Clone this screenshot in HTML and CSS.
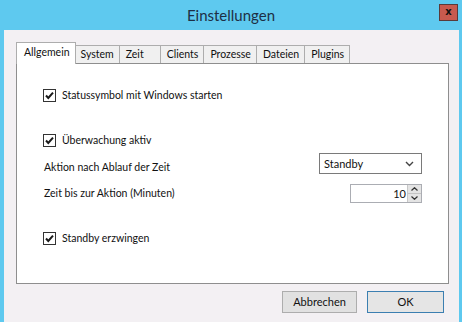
FILE: index.html
```html
<!DOCTYPE html>
<html lang="de">
<head>
  <meta charset="UTF-8">
  <link rel="stylesheet" href="styles.css">
</head>
<body>
  <div class="window">
    <div class="titlebar">
      <span></span>
      <div class="title">Einstellungen</div>
      <div class="close">x</div>
    </div>
    <div class="client">
      <div class="tabstrip">
        <div class="tab active">Allgemein</div>
        <div class="tab">System</div>
        <div class="tab tab-zeit">Zeit</div>
        <div class="tab">Clients</div>
        <div class="tab">Prozesse</div>
        <div class="tab">Dateien</div>
        <div class="tab">Plugins</div>
      </div>
      <div class="panel">
        <label class="row check first">
          <svg class="box" width="13" height="13" viewBox="0 0 13 13"><rect x="0.5" y="0.5" width="12" height="12" fill="#fff" stroke="#333"/><path d="M3 6.5 L5.3 9 L10 3.6" fill="none" stroke="#1a1a1a" stroke-width="2"/></svg>
          <span>Statussymbol mit Windows starten</span>
        </label>
        <label class="row check second">
          <svg class="box" width="13" height="13" viewBox="0 0 13 13"><rect x="0.5" y="0.5" width="12" height="12" fill="#fff" stroke="#333"/><path d="M3 6.5 L5.3 9 L10 3.6" fill="none" stroke="#1a1a1a" stroke-width="2"/></svg>
          <span>Überwachung aktiv</span>
        </label>
        <div class="row field select-row">
          <span class="label">Aktion nach Ablauf der Zeit</span>
          <div class="select">
            <span>Standby</span>
            <svg width="9" height="6" viewBox="0 0 9 6"><path d="M1 1 L4.5 4.5 L8 1" fill="none" stroke="#444" stroke-width="1.4"/></svg>
          </div>
        </div>
        <div class="row field spin-row">
          <span class="label">Zeit bis zur Aktion (Minuten)</span>
          <div class="spinner">
            <span class="value">10</span>
            <div class="arrows">
              <div class="arrow"><svg width="7" height="4" viewBox="0 0 7 4"><path d="M0.5 3.5 L3.5 0.7 L6.5 3.5" fill="none" stroke="#333" stroke-width="1.2"/></svg></div>
              <div class="arrow"><svg width="7" height="4" viewBox="0 0 7 4"><path d="M0.5 0.5 L3.5 3.3 L6.5 0.5" fill="none" stroke="#333" stroke-width="1.2"/></svg></div>
            </div>
          </div>
        </div>
        <label class="row check third">
          <svg class="box" width="13" height="13" viewBox="0 0 13 13"><rect x="0.5" y="0.5" width="12" height="12" fill="#fff" stroke="#333"/><path d="M3 6.5 L5.3 9 L10 3.6" fill="none" stroke="#1a1a1a" stroke-width="2"/></svg>
          <span>Standby erzwingen</span>
        </label>
      </div>
      <div class="buttons">
        <div class="button">Abbrechen</div>
        <div class="button default">OK</div>
      </div>
    </div>
  </div>
</body>
</html>
```

FILE: styles.css
```css
* {
  margin: 0;
  padding: 0;
  box-sizing: border-box;
}
html, body {
  width: 462px;
  height: 322px;
  overflow: hidden;
}
body {
  font-family: Lato, "Liberation Sans", sans-serif;
  font-size: 10.5px;
  color: #111;
}
.window {
  display: flex;
  flex-direction: column;
  width: 462px;
  height: 322px;
  background-color: #5ec9ef;
}
/* Titelleiste */
.titlebar {
  display: grid;
  grid-template-columns: 1fr auto 1fr;
  height: 30px;
}
.title {
  align-self: center;
  font-size: 15px;
  color: #1d2f45;
}
.close {
  justify-self: end;
  align-self: start;
  width: 19px;
  height: 17px;
  margin: 4px 4px 0 0;
  border: 1px solid #5a3a3a;
  background-color: #c75a4e;
  color: #111;
  font-family: "DejaVu Sans", sans-serif;
  font-weight: bold;
  font-size: 10px;
  line-height: 14px;
  text-align: center;
}
.client {
  flex: 1;
  display: flex;
  flex-direction: column;
  margin: 0 3px 0 4px;
  padding: 12px 10px 0 12px;
  background-color: #f3f0f3;
}
/* Reiter */
.tabstrip {
  display: flex;
  align-items: flex-end;
  height: 21px;
}
.tab {
  height: 18px;
  margin-left: -1px;
  padding: 0 5px 0 6px;
  border: 1px solid #adadad;
  border-bottom: none;
  background-color: #f0f0f0;
  line-height: 16px;
}
.tab-zeit {
  min-width: 42px;
}
.tab.active {
  position: relative;
  z-index: 2;
  height: 22px;
  margin-left: 0;
  margin-right: -1px;
  margin-bottom: -1px;
  padding: 0 5px 0 7px;
  background-color: #fff;
  line-height: 19px;
}
.panel {
  display: flex;
  flex-direction: column;
  height: 221px;
  padding: 0 26px;
  border: 1px solid #8e8e8e;
  background-color: #fff;
}
.row {
  display: flex;
  align-items: center;
}
.check {
  height: 20px;
  gap: 6px;
}
.first {
  margin-top: 21px;
}
.second {
  margin-top: 25px;
}
.third {
  margin-top: 25px;
}
.field {
  justify-content: space-between;
  padding-left: 1px;
}
.select-row {
  align-items: flex-start;
  margin-top: 3px;
}
.select-row .label {
  padding-top: 8px;
}
.spin-row {
  margin-top: 10px;
}
.spin-row .label {
  margin-top: -2px;
}
.select {
  display: flex;
  align-items: center;
  justify-content: space-between;
  width: 103px;
  height: 21px;
  padding: 0 7px 0 4px;
  border: 1px solid #7a7a7a;
  background-color: #fff;
  font-size: 11px;
}
.spinner {
  display: flex;
  width: 72px;
  height: 19px;
  border: 1px solid #abadb3;
  background-color: #fff;
  font-size: 11px;
}
.spinner .value {
  flex: 1;
  text-align: right;
  padding-right: 1px;
  line-height: 17px;
}
.arrows {
  display: flex;
  flex-direction: column;
  width: 14px;
  border-left: 1px solid #c8c8c8;
}
.arrow {
  flex: 1;
  display: flex;
  align-items: center;
  justify-content: center;
  background-color: #e4e4e4;
}
.arrow + .arrow {
  border-top: 1px solid #c4c4c4;
}
/* Schaltflächen */
.buttons {
  display: flex;
  justify-content: flex-end;
  gap: 10px;
  margin-top: 7px;
  padding-right: 5px;
}
.button {
  width: 75px;
  height: 22px;
  border: 1px solid #adadad;
  background-color: #e1e1e1;
  line-height: 20px;
  text-align: center;
  font-size: 11px;
}
.button.default {
  width: 77px;
  border-color: #3c7fb1;
  background-color: #e5e5e5;
}
```
